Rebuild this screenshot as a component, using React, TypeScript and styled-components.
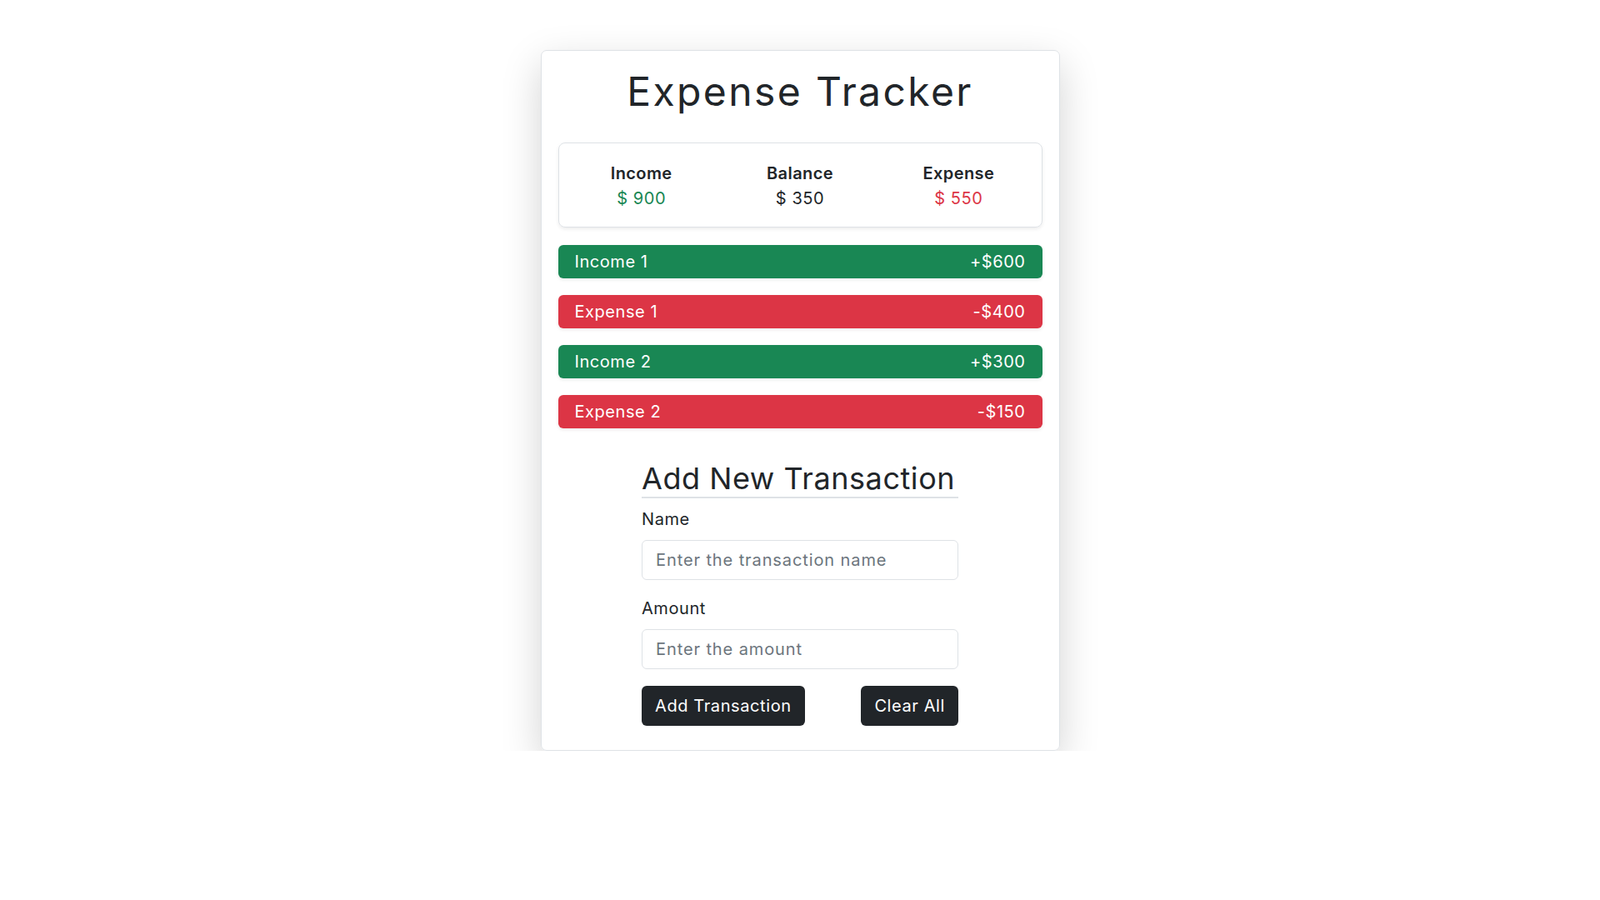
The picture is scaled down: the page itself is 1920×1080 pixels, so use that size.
import styled, { createGlobalStyle } from 'styled-components'

const GlobalStyle = createGlobalStyle`
  * {
    box-sizing: border-box;
  }
  body {
    margin: 0;
    background: #fff;
    color: #212529;
    font-family: Inter, "Noto Sans", "DejaVu Sans", sans-serif;
    letter-spacing: 0.035em;
  }
`

export const Page = styled.div`
  display: flex;
  justify-content: center;
  padding-top: 60px;
`
export const Card = styled.div`
  width: 623px;
  border: 1px solid #dee2e6;
  border-radius: 7px;
  box-shadow: 0 1rem 3rem rgba(0, 0, 0, 0.175);
  padding: 20px 20px 29px;
`
export const Title = styled.h1`
  margin: 0 0 32px;
  font-size: 48px;
  font-weight: 400;
  line-height: 58px;
  letter-spacing: 0.05em;
  text-align: center;
`
export const Summary = styled.div`
  display: grid;
  grid-template-columns: repeat(3, 1fr);
  border: 1px solid #dee2e6;
  border-radius: 8px;
  box-shadow: 0 0.125rem 0.25rem rgba(0, 0, 0, 0.075);
  padding: 21px 4px 19px;
  text-align: center;
`
export const SummaryLabel = styled.div`
  font-size: 20px;
  font-weight: 600;
  line-height: 30px;
  letter-spacing: 0.02em;
`
export const SummaryValue = styled.div<{ $tone?: 'income' | 'expense' }>`
  font-size: 20px;
  line-height: 30px;
  color: ${(p) =>
    p.$tone === 'income' ? '#198754' : p.$tone === 'expense' ? '#dc3545' : '#212529'};
`
export const List = styled.ul`
  list-style: none;
  margin: 21px 0 0;
  padding: 0;
  display: flex;
  flex-direction: column;
  gap: 20px;
`
export const Row = styled.li<{ $income: boolean }>`
  display: flex;
  justify-content: space-between;
  align-items: center;
  height: 40px;
  padding: 0 20px;
  border-radius: 6px;
  background: ${(p) => (p.$income ? '#198754' : '#dc3545')};
  color: #fff;
  font-size: 20px;
  box-shadow: 0 0.125rem 0.25rem rgba(0, 0, 0, 0.075);
`
export const Form = styled.form`
  width: 380px;
  margin: 39px auto 0;
`
export const FormTitle = styled.h2`
  margin: 0 0 10px;
  font-size: 36px;
  font-weight: 400;
  line-height: 43px;
  border-bottom: 2px solid #dee2e6;
  white-space: nowrap;
`
export const Field = styled.div`
  margin-bottom: 19px;
`
export const Label = styled.label`
  display: block;
  font-size: 20px;
  line-height: 30px;
  margin-bottom: 10px;
`
export const Input = styled.input`
  display: block;
  width: 100%;
  height: 48px;
  padding: 0 16px;
  border: 1px solid #dee2e6;
  border-radius: 6px;
  font-family: inherit;
  letter-spacing: 0.045em;
  font-size: 20px;
  color: #212529;
  &::placeholder {
    color: #6c757d;
  }
`
export const Actions = styled.div`
  display: flex;
  justify-content: space-between;
  padding-top: 1px;
`
export const Button = styled.button`
  height: 48px;
  padding: 0 16px;
  border: none;
  border-radius: 6px;
  background: #212529;
  color: #fff;
  font-family: inherit;
  letter-spacing: 0.03em;
  font-size: 20px;
  cursor: pointer;
`

const transactions = [
  { name: 'Income 1', amount: 600 },
  { name: 'Expense 1', amount: -400 },
  { name: 'Income 2', amount: 300 },
  { name: 'Expense 2', amount: -150 },
]

const App = () => {
  const income = transactions.filter((t) => t.amount > 0).reduce((s, t) => s + t.amount, 0)
  const expense = -transactions.filter((t) => t.amount < 0).reduce((s, t) => s + t.amount, 0)

  return (
    <Page>
      <GlobalStyle />
      <Card>
        <Title>Expense Tracker</Title>
        <Summary>
          <div>
            <SummaryLabel>Income</SummaryLabel>
            <SummaryValue $tone="income">$ {income}</SummaryValue>
          </div>
          <div>
            <SummaryLabel>Balance</SummaryLabel>
            <SummaryValue>$ {income - expense}</SummaryValue>
          </div>
          <div>
            <SummaryLabel>Expense</SummaryLabel>
            <SummaryValue $tone="expense">$ {expense}</SummaryValue>
          </div>
        </Summary>
        <List>
          {transactions.map((t) => (
            <Row key={t.name} $income={t.amount > 0}>
              <span>{t.name}</span>
              <span>
                {t.amount > 0 ? '+' : '-'}${Math.abs(t.amount)}
              </span>
            </Row>
          ))}
        </List>
        <Form onSubmit={(e) => e.preventDefault()}>
          <FormTitle>Add New Transaction</FormTitle>
          <Field>
            <Label htmlFor="name">Name</Label>
            <Input id="name" placeholder="Enter the transaction name" />
          </Field>
          <Field>
            <Label htmlFor="amount">Amount</Label>
            <Input id="amount" placeholder="Enter the amount" />
          </Field>
          <Actions>
            <Button type="submit">Add Transaction</Button>
            <Button type="button">Clear All</Button>
          </Actions>
        </Form>
      </Card>
    </Page>
  )
}
export default App
